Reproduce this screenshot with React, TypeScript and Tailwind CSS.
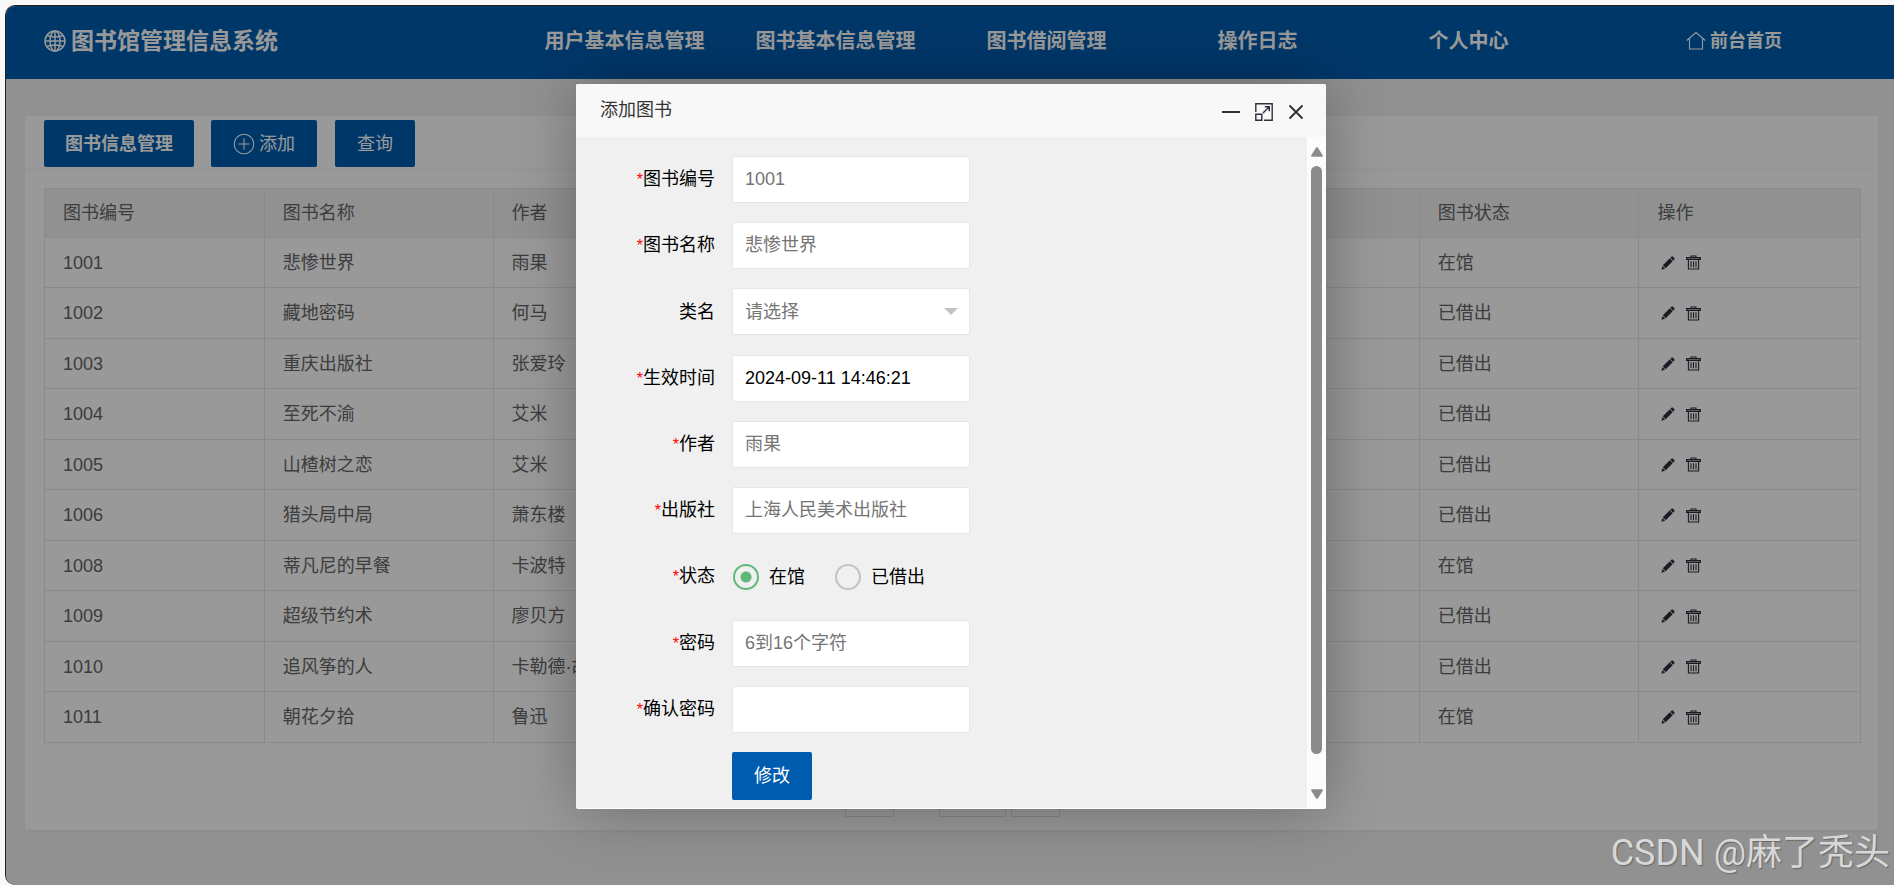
import type { ReactNode } from "react";
import clsx from "clsx";

type Book = {
  id: string;
  name: string;
  author: string;
  status: string;
};

const navItems = ["用户基本信息管理", "图书基本信息管理", "图书借阅管理", "操作日志", "个人中心"];

const books: Book[] = [
  { id: "1001", name: "悲惨世界", author: "雨果", status: "在馆" },
  { id: "1002", name: "藏地密码", author: "何马", status: "已借出" },
  { id: "1003", name: "重庆出版社", author: "张爱玲", status: "已借出" },
  { id: "1004", name: "至死不渝", author: "艾米", status: "已借出" },
  { id: "1005", name: "山楂树之恋", author: "艾米", status: "已借出" },
  { id: "1006", name: "猎头局中局", author: "萧东楼", status: "已借出" },
  { id: "1008", name: "蒂凡尼的早餐", author: "卡波特", status: "在馆" },
  { id: "1009", name: "超级节约术", author: "廖贝方", status: "已借出" },
  { id: "1010", name: "追风筝的人", author: "卡勒德·胡", status: "已借出" },
  { id: "1011", name: "朝花夕拾", author: "鲁迅", status: "在馆" },
];

const inputClass =
  "h-[47px] w-[238px] rounded-[2px] border border-[#e6e6e6] bg-white px-3 text-black outline-none placeholder:text-[#757575]";

function GlobeIcon() {
  return (
    <svg viewBox="0 0 22 22" className="size-[22px]" fill="none" stroke="currentColor" strokeWidth="1.5">
      <circle cx="11" cy="11" r="10" />
      <ellipse cx="11" cy="11" rx="5" ry="10" />
      <path d="M11 1v20M1 11h20M3 5.5c4.5 1.6 11.5 1.6 16 0M3 16.5c4.5-1.6 11.5-1.6 16 0" />
    </svg>
  );
}

function PlusCircleIcon() {
  return (
    <svg viewBox="0 0 22 22" className="size-[22px]" fill="none" stroke="currentColor" strokeWidth="1.1">
      <circle cx="11" cy="11" r="9.8" />
      <path d="M11 5.5v11M5.5 11h11" />
    </svg>
  );
}

function HomeIcon() {
  return (
    <svg viewBox="0 0 20 20" className="size-5" fill="none" stroke="currentColor" strokeWidth="1.1">
      <path d="M.7 9.5 10 1.5l9.3 8M3.5 8v10h13V8" />
    </svg>
  );
}

function PencilIcon() {
  return (
    <svg viewBox="0 0 14 14" className="size-3.5" fill="currentColor">
      <path d="M10.2.9c.6-.6 1.500-.6 2.100 0l.8.8c.6.6.6 1.500 0 2.100l-.9.9-2.900-2.900zM8.800 2.300l2.900 2.900-7 7-2.900-2.900zM1.400 10l2.700 2.700-3.700 1z" />
    </svg>
  );
}

function TrashIcon() {
  return (
    <svg viewBox="0 0 15 15" className="size-[15px]" fill="none" stroke="currentColor" strokeWidth="1.1">
      <path d="M5 2.200V1h5v1.200M.6 2.600h13.800v1.800H.6zM2.400 4.500v9.500h10.200V4.500M5 6.200v6M7.500 6.200v6M10 6.200v6" />
    </svg>
  );
}

function MaximizeIcon() {
  return (
    <svg viewBox="0 0 18 18" className="size-[18px]" fill="none" stroke="currentColor" strokeWidth="1.4">
      <path d="M.8 9V.8h16.400v16.400H9M.8 11.200h6v6h-6zM8 10l6-6M9.800 3.700h4.500v4.500" />
    </svg>
  );
}

function Header() {
  return (
    <header className="grid h-[73px] grid-cols-[513fr_repeat(5,211fr)_320fr] items-center bg-[#005caf] pb-[3px] text-xl font-bold text-white">
      <h1 className="flex items-center gap-[5px] pl-[38px] text-[23px] whitespace-nowrap">
        <GlobeIcon />
        图书馆管理信息系统
      </h1>
      {navItems.map((item) => (
        <a key={item} href="#" className="text-center whitespace-nowrap">
          {item}
        </a>
      ))}
      <a href="#" className="flex items-center justify-center gap-1 text-lg whitespace-nowrap">
        <HomeIcon />
        前台首页
      </a>
    </header>
  );
}

function Toolbar() {
  const buttonClass = "flex h-[47px] items-center justify-center rounded-[2px] bg-[#005caf] text-white";

  return (
    <div className="flex items-center border-b border-[#f6f6f6] px-[19px] pt-1 pb-[2px]">
      <button type="button" className={clsx(buttonClass, "w-[150px] font-bold")}>
        图书信息管理
      </button>
      <button type="button" className={clsx(buttonClass, "ml-[17px] w-[106px] gap-1")}>
        <PlusCircleIcon />
        添加
      </button>
      <button type="button" className={clsx(buttonClass, "ml-[18px] w-20")}>
        查询
      </button>
    </div>
  );
}

function BookTable() {
  const cellClass = "border border-[#e6e6e6] px-[18px] py-0 text-left font-normal whitespace-nowrap";

  return (
    <table className="w-full table-fixed border-collapse text-[#666]">
      <colgroup>
        <col className="w-[12.1%]" />
        <col className="w-[12.6%]" />
        <col />
        <col className="w-[12.1%]" />
        <col className="w-[12.2%]" />
      </colgroup>
      <thead>
        <tr className="h-[49px] bg-[#f2f2f2]">
          <th className={cellClass}>图书编号</th>
          <th className={cellClass}>图书名称</th>
          <th className={cellClass}>作者</th>
          <th className={cellClass}>图书状态</th>
          <th className={cellClass}>操作</th>
        </tr>
      </thead>
      <tbody>
        {books.map((book) => (
          <tr key={book.id} className="odd:h-[50px] even:h-[51px]">
            <td className={cellClass}>{book.id}</td>
            <td className={cellClass}>{book.name}</td>
            <td className={cellClass}>{book.author}</td>
            <td className={cellClass}>{book.status}</td>
            <td className={cellClass}>
              <div className="flex items-center gap-[11px] pl-1 text-[#2e2d3c]">
                <button type="button" aria-label="edit">
                  <PencilIcon />
                </button>
                <button type="button" aria-label="delete">
                  <TrashIcon />
                </button>
              </div>
            </td>
          </tr>
        ))}
      </tbody>
    </table>
  );
}

function Pager() {
  const pageClass = "h-9 border border-[#e2e2e2] bg-white";

  return (
    <nav className="mt-[38px] flex justify-center" aria-label="pager">
      <button type="button" aria-label="previous" className={clsx(pageClass, "mr-[45px] w-[49px]")} />
      <button type="button" aria-label="next" className={clsx(pageClass, "mr-[5px] w-[67px]")} />
      <button type="button" aria-label="last" className={clsx(pageClass, "w-[49px]")} />
    </nav>
  );
}

function FormRow({
  label,
  htmlFor,
  required = true,
  children,
}: {
  label: string;
  htmlFor?: string;
  required?: boolean;
  children: ReactNode;
}) {
  return (
    <div className="flex h-[47px] items-center">
      <label htmlFor={htmlFor} className="w-[156px] shrink-0 pr-[17px] text-right text-black">
        {required && <span className="text-base text-[#f00]">*</span>}
        {label}
      </label>
      {children}
    </div>
  );
}

function StatusRadio({ id, label, checked }: { id: string; label: string; checked?: boolean }) {
  return (
    <label htmlFor={id} className="flex items-center gap-[10px] text-black">
      <input
        id={id}
        type="radio"
        name="status"
        defaultChecked={checked}
        className="size-[26px] appearance-none rounded-full border-2 border-[#c2c2c2] checked:border-[#5fb878] checked:bg-[radial-gradient(circle,#5fb878_5px,transparent_6px)]"
      />
      {label}
    </label>
  );
}

function Scrollbar() {
  return (
    <div className="flex w-[19px] shrink-0 flex-col items-center bg-[#fcfcfc] pt-[10px] pb-[9px] text-[#8b8b8b]">
      <svg viewBox="0 0 12 10" className="h-[10px] w-3" fill="currentColor">
        <path d="M5 .8q1-1.400 2 0l4.700 7.400q.7 1.600-1 1.600H1.300q-1.700 0-1-1.600z" />
      </svg>
      <div className="mt-[9px] h-[588px] w-[11px] rounded-full bg-[#8b8b8b]" />
      <svg viewBox="0 0 12 10" className="mt-auto h-[10px] w-3" fill="currentColor">
        <path d="M5 9.200q1 1.400 2 0l4.700-7.400q.7-1.600-1-1.600H1.300q-1.700 0-1 1.600z" />
      </svg>
    </div>
  );
}

function AddBookDialog() {
  return (
    <div
      role="dialog"
      aria-labelledby="dialog-title"
      className="w-[750px] rounded-[2px] bg-white pb-px shadow-[1px_1px_62px_rgba(0,0,0,0.3)]"
    >
      <div className="flex h-[53px] items-center justify-between rounded-t-[2px] bg-[#f8f8f8] pr-[22px] pl-6 text-[#333]">
        <h2 id="dialog-title" className="pb-[2px]">
          添加图书
        </h2>
        <div className="flex items-center gap-[15px] pt-[2px] text-[#2e2d3c]">
          <button type="button" aria-label="minimize" className="flex h-[18px] w-[18px] items-center">
            <span className="h-0.5 w-full bg-[#2e2d3c]" />
          </button>
          <button type="button" aria-label="maximize">
            <MaximizeIcon />
          </button>
          <button type="button" aria-label="close">
            <svg viewBox="0 0 16 16" className="size-4" fill="none" stroke="currentColor" strokeWidth="1.8">
              <path d="M1.5 1.5l13 13M14.5 1.5l-13 13" />
            </svg>
          </button>
        </div>
      </div>

      <div className="flex h-[671px] bg-[#f0f0f0]">
        <form className="flex grow flex-col justify-between pt-[19px] pb-2">
          <FormRow label="图书编号" htmlFor="book-id">
            <input id="book-id" type="text" placeholder="1001" className={inputClass} />
          </FormRow>
          <FormRow label="图书名称" htmlFor="book-name">
            <input id="book-name" type="text" placeholder="悲惨世界" className={inputClass} />
          </FormRow>
          <FormRow label="类名" htmlFor="category" required={false}>
            <div className="relative">
              <select
                id="category"
                className="h-[47px] w-[238px] appearance-none rounded-[2px] border border-[#e6e6e6] bg-white px-3 text-[#757575] outline-none"
              >
                <option>请选择</option>
              </select>
              <svg viewBox="0 0 14 7" className="pointer-events-none absolute top-5 right-3 h-[7px] w-3.5 fill-[#c2c2c2]">
                <path d="M0 0h14L7 7z" />
              </svg>
            </div>
          </FormRow>
          <FormRow label="生效时间" htmlFor="effective-time">
            <input id="effective-time" type="text" defaultValue="2024-09-11 14:46:21" className={inputClass} />
          </FormRow>
          <FormRow label="作者" htmlFor="author">
            <input id="author" type="text" placeholder="雨果" className={inputClass} />
          </FormRow>
          <FormRow label="出版社" htmlFor="publisher">
            <input id="publisher" type="text" placeholder="上海人民美术出版社" className={inputClass} />
          </FormRow>
          <FormRow label="状态" htmlFor="status-in">
            <div className="flex gap-[30px] pl-px">
              <StatusRadio id="status-in" label="在馆" checked />
              <StatusRadio id="status-out" label="已借出" />
            </div>
          </FormRow>
          <FormRow label="密码" htmlFor="password">
            <input id="password" type="password" placeholder="6到16个字符" className={inputClass} />
          </FormRow>
          <FormRow label="确认密码" htmlFor="password-again">
            <input id="password-again" type="password" className={inputClass} />
          </FormRow>
          <button type="submit" className="ml-[156px] h-12 w-20 rounded-[2px] bg-[#005caf] text-white">
            修改
          </button>
        </form>
        <Scrollbar />
      </div>
    </div>
  );
}

function App() {
  return (
    <div className="min-h-screen bg-[#f8f8f8] pt-[5px] pl-[5px] font-['Liberation_Sans','Noto_Sans_CJK_SC',sans-serif] text-lg leading-6">
      <div className="relative min-h-[calc(100vh-5px)] overflow-hidden rounded-l-[10px] border-t border-l border-[#222] bg-[#f2f2f2]">
        <Header />
        <main className="mt-[37px] mr-4 ml-[19px] h-[714px] rounded-[2px] bg-white shadow-[0_1px_2px_rgba(0,0,0,0.05)]">
          <Toolbar />
          <div className="pt-[18px] pr-[17px] pl-[19px]">
            <BookTable />
            <Pager />
          </div>
        </main>

        <div className="absolute inset-0 flex items-start justify-center bg-black/40 pt-[78px] pl-[2px]">
          <AddBookDialog />
        </div>

        <p className="absolute right-1 bottom-3 font-['Roboto','Noto_Sans_CJK_SC',sans-serif] text-4xl text-[#d8d8d8] [text-shadow:1px_1px_1px_#666]">
          CSDN @麻了秃头
        </p>
      </div>
    </div>
  );
}

export default App;
